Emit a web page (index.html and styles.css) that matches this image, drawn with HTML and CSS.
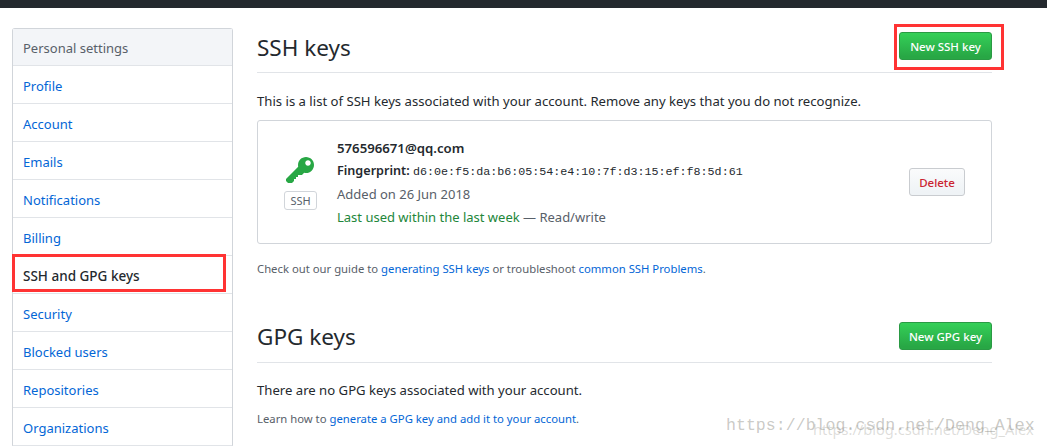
FILE: index.html
```html
<!DOCTYPE html>
<html>
<head>
    <title>SSH and GPG keys</title>
    <link rel="stylesheet" href="styles.css">
</head>
<body>
    <div class="topbar"></div>
    <div class="container">
        <div class="menu">
            <div class="menu-heading">Personal settings</div>
            <a class="menu-item">Profile</a>
            <a class="menu-item">Account</a>
            <a class="menu-item">Emails</a>
            <a class="menu-item">Notifications</a>
            <a class="menu-item">Billing</a>
            <a class="menu-item selected">SSH and GPG keys</a>
            <a class="menu-item">Security</a>
            <a class="menu-item">Blocked users</a>
            <a class="menu-item">Repositories</a>
            <a class="menu-item">Organizations</a>
        </div>
        <div class="content">
            <div class="subhead">
                <h2>SSH keys</h2>
                <button class="btn-new">New SSH key</button>
            </div>
            <p class="intro">This is a list of SSH keys associated with your account. Remove any keys that you do not recognize.</p>
            <div class="key-box">
                <div class="key-icon">
                    <svg class="key-svg" width="28" height="32" viewBox="0 0 14 16"><path fill="#28a745" fill-rule="evenodd" d="M12.83 2.17C12.08 1.42 11.14 1.03 10 1c-1.13.03-2.08.42-2.83 1.17S6.04 3.86 6.01 5c0 .3.03.59.09.89L0 12v1l1 1h2l1-1v-1h1v-1h1v-1h2l1.09-1.11c.3.08.59.11.91.11 1.14-.03 2.08-.42 2.83-1.17S13.97 6.14 14 5c-.03-1.14-.42-2.08-1.17-2.83zM11 5.38c-.77 0-1.38-.61-1.38-1.38 0-.77.61-1.38 1.38-1.38.77 0 1.38.61 1.38 1.38 0 .77-.61 1.38-1.38 1.38z"/></svg>
                    <span class="key-label">SSH</span>
                </div>
                <div class="key-info">
                    <div class="key-title">576596671@qq.com</div>
                    <div class="key-line key-print"><b>Fingerprint:</b> <code>d6:0e:f5:da:b6:05:54:e4:10:7f:d3:15:ef:f8:5d:61</code></div>
                    <div class="key-line muted">Added on 26 Jun 2018</div>
                    <div class="key-line muted"><span class="green">Last used within the last week</span> — Read/write</div>
                </div>
                <button class="btn-delete">Delete</button>
            </div>
            <p class="note">Check out our guide to <a>generating SSH keys</a> or troubleshoot <a>common SSH Problems</a>.</p>
            <div class="subhead gpg">
                <h2>GPG keys</h2>
                <button class="btn-new">New GPG key</button>
            </div>
            <p class="intro gpg-intro">There are no GPG keys associated with your account.</p>
            <p class="note gpg-note">Learn how to <a>generate a GPG key and add it to your account</a>.</p>
        </div>
    </div>

    <!-- annotations drawn over the screenshot -->
    <div class="mark mark-menu"></div>
    <div class="mark mark-btn"></div>
    <div class="watermark wm-back">https://blog.csdn.net/Deng_Alex</div>
    <div class="watermark wm-front">https://blog.csdn.net/Deng_Alex</div>
</body>
</html>
```

FILE: styles.css
```css
html, body {
    margin: 0;
    height: 446px;
    overflow: hidden;
    background: #fff;
}
body {
    font-family: "Noto Sans", Arial, sans-serif;
    font-size: 14px;
    color: #24292e;
}
.topbar {
    height: 8px;
    background: #24292e;
}
.container {
    display: flex;
    gap: 24px;
    padding: 20px 0 0 12px;
}
.menu {
    width: 219px;
    border: 1px solid #d1d5da;
    border-bottom-color: #e1e4e8;
    border-radius: 3px 3px 0 0;
    flex-shrink: 0;
}
.menu-heading {
    height: 36px;
    line-height: 38px;
    padding-left: 10px;
    font-size: 13px;
    color: #586069;
    background: #f3f5f8;
    border-bottom: 1px solid #e1e4e8;
}
.menu-item {
    display: block;
    height: 37px;
    line-height: 41px;
    padding-left: 10px;
    font-size: 13px;
    color: #0366d6;
    border-bottom: 1px solid #e1e4e8;
}
.menu-item:last-child {
    border-bottom: none;
}
.selected {
    color: #24292e;
    font-weight: 500;
    font-size: 13.5px;
}
.content {
    width: 735px;
}
.subhead {
    display: flex;
    justify-content: space-between;
    align-items: center;
    height: 36px;
    padding-bottom: 8px;
    border-bottom: 1px solid #e1e4e8;
}
.subhead h2 {
    margin: 2px 0 0;
    font-size: 22.5px;
    font-weight: 400;
    color: #24292e;
}
.btn-new {
    width: 93px;
    height: 28px;
    padding: 0;
    font: inherit;
    font-size: 11.5px;
    font-weight: 500;
    color: #fff;
    background: linear-gradient(#34d058, #28a745 90%);
    border: 1px solid #2a9a44;
    border-radius: 3px;
}
.intro {
    margin: 18px 0 0;
    line-height: 20px;
    font-size: 13.13px;
}
.key-box {
    display: flex;
    align-items: center;
    height: 122px;
    margin-top: 9px;
    border: 1px solid #d1d5da;
    border-radius: 3px;
}
.key-icon {
    display: flex;
    flex-direction: column;
    align-items: center;
    gap: 4px;
    width: 33px;
    margin-left: 26px;
}
.key-svg {
    margin-right: 1px;
}
.key-label {
    width: 31px;
    height: 17px;
    line-height: 17px;
    text-align: center;
    font-size: 11px;
    color: #586069;
    border: 1px solid #d1d5da;
    border-radius: 3px;
}
.key-info {
    flex: 1;
    margin-left: 20px;
}
.key-title {
    font-size: 13.2px;
    font-weight: 600;
    line-height: 23px;
    padding-top: 2px;
    margin-bottom: -1px;
}
.key-line {
    font-size: 13px;
    line-height: 23px;
}
.key-print {
    margin-bottom: -1px;
}
.key-line b {
    font-weight: 600;
    font-size: 12.6px;
}
code {
    font-family: "Liberation Mono", monospace;
    font-size: 11.7px;
}
.muted {
    color: #586069;
}
.green {
    color: #22863a;
}
.btn-delete {
    width: 56px;
    height: 28px;
    margin-right: 26px;
    padding: 0;
    font: inherit;
    font-size: 11.5px;
    font-weight: 500;
    color: #cb2431;
    background: linear-gradient(#fafbfc, #eff3f6 90%);
    border: 1px solid #c9ccd0;
    border-radius: 3px;
}
.note {
    margin: 16px 0 0;
    font-size: 11.3px;
    line-height: 18px;
    color: #586069;
}
.note a {
    color: #0366d6;
}
.gpg {
    margin-top: 32px;
    height: 52px;
    padding-bottom: 0;
}
.gpg h2 {
    margin-top: 0;
}
.gpg-intro {
    margin-top: 17px;
}
.gpg-note {
    margin-top: 10px;
}
.mark {
    position: absolute;
    border: 3px solid #ff3333;
    box-sizing: border-box;
}
.mark-menu {
    left: 12px;
    top: 254px;
    width: 214px;
    height: 38px;
}
.mark-btn {
    left: 894px;
    top: 24px;
    width: 110px;
    height: 46px;
}
.watermark {
    position: absolute;
    white-space: nowrap;
}
.wm-back {
    left: 726px;
    top: 416px;
    font-family: "Liberation Mono", monospace;
    font-size: 16.6px;
    color: rgba(120, 120, 110, 0.4);
}
.wm-front {
    left: 813px;
    top: 419px;
    font-family: "Noto Sans", sans-serif;
    font-size: 14.6px;
    color: rgba(120, 120, 110, 0.25);
}
```
